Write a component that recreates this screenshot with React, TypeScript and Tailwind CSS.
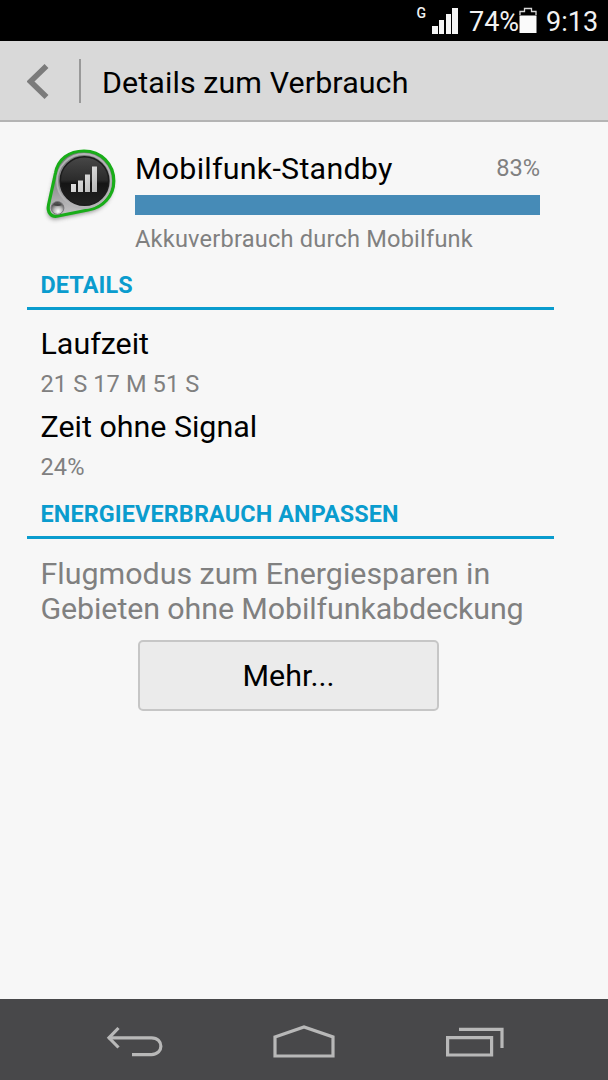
import type { ReactNode } from "react";

function StatusBar() {
  return (
    <div className="flex h-[41px] shrink-0 items-center justify-end bg-black pr-[10px] text-[27px] leading-[40px] text-[#f2f2f2]">
      <span className="mb-[15px] mr-[6px] text-[14px] leading-[14px] font-medium">G</span>
      <svg className="mr-[11px] h-[26px] w-[26px]" viewBox="0 0 26 26" fill="#f5f5f5" shapeRendering="crispEdges">
        <path d="M0 18h6v8H0zM7 12h5v14H7zM14 6h5v20h-5zM20 0h6v26h-6z" />
      </svg>
      <span className="w-[50px] pt-[2px] whitespace-nowrap">74%</span>
      <svg className="mr-[9px] mb-[2px] h-[26px] w-[18px]" viewBox="0 0 18 26">
        <path d="M1 8V4.500H5.500V1.500H12.500V4.500H17V8" fill="none" stroke="#d8d8d8" strokeWidth="1.300" />
        <path d="M0.500 8.500h17V26h-17z" fill="#fafafa" />
      </svg>
      <span className="w-[52px] pt-[2px] whitespace-nowrap">9:13</span>
    </div>
  );
}

function Header() {
  return (
    <header className="flex h-[81px] shrink-0 items-center border-b-2 border-[#b4b4b4] bg-[#d9d9d9]">
      <svg className="ml-[27px] h-[36px] w-[22px]" viewBox="0 0 22 36">
        <path d="M19.500 3 3.500 18.500 19.500 34" fill="none" stroke="#7b7b7b" strokeWidth="5.600" />
      </svg>
      <div className="ml-[30px] h-[44px] w-[2px] bg-[#999999]" />
      <h1 className="ml-[21px] pt-[4px] text-[30.400px] leading-[36px] tracking-[0.1px]">Details zum Verbrauch</h1>
    </header>
  );
}

function StandbyIcon() {
  return (
    <svg className="h-[82px] w-[80px]" viewBox="40 144 80 82">
      <defs>
        <linearGradient id="shell" x1="0" y1="0" x2="0" y2="1">
          <stop offset="0" stopColor="#77797a" />
          <stop offset="0.500" stopColor="#8b8b8d" />
          <stop offset="1" stopColor="#c9c8ca" />
        </linearGradient>
        <linearGradient id="dial" x1="0" y1="0" x2="0" y2="1">
          <stop offset="0" stopColor="#484848" />
          <stop offset="0.480" stopColor="#2b2b2b" />
          <stop offset="0.550" stopColor="#151515" />
          <stop offset="1" stopColor="#222222" />
        </linearGradient>
        <linearGradient id="bars" x1="0" y1="0" x2="1" y2="1">
          <stop offset="0" stopColor="#f5f5f5" />
          <stop offset="1" stopColor="#b5b5b5" />
        </linearGradient>
        <radialGradient id="knob" cx="0.550" cy="0.750" r="0.700">
          <stop offset="0" stopColor="#ffffff" />
          <stop offset="0.450" stopColor="#bbbbbb" />
          <stop offset="1" stopColor="#444444" />
        </radialGradient>
        <filter id="shade" x="-20%" y="-20%" width="140%" height="140%">
          <feGaussianBlur stdDeviation="2" />
        </filter>
      </defs>
      <path d="M55 175C58 160 69 152 84 152C101 152 114 165 114 180C114 196 103 208 88 210L59 216C51 218 47 212 49 205Z" fill="#555555" opacity="0.600" filter="url(#shade)" transform="translate(-1 3)" />
      <path d="M55.500 173C58 159 69 151 84 151C101 151 113.800 164 113.800 181C113.800 196 103 207.500 88 210L58 216C51 217.500 47 212 48.500 205Z" fill="url(#shell)" stroke="#19ad19" strokeWidth="3.200" />
      <circle cx="84" cy="181" r="27" fill="none" stroke="#b4b4b6" strokeWidth="1.800" />
      <circle cx="84.500" cy="181" r="24.300" fill="url(#dial)" stroke="#1c1c1c" strokeWidth="1.500" />
      <circle cx="57.500" cy="208" r="6.400" fill="url(#knob)" stroke="#77777a" strokeWidth="1" />
      <path d="M53 205Q57 201.500 62 205Q58 207 53 205Z" fill="#444444" />
      <path d="M71 184h5v8h-5zM78 180.500h5V192h-5zM85 174.500h5V192h-5zM92 166.500h5V192h-5z" fill="url(#bars)" />
    </svg>
  );
}

function Section({ title, children }: { title: string; children: ReactNode }) {
  return (
    <section className="ml-[27px] w-[527px]">
      <h2 className="h-[39px] border-b-[3px] border-[#0a9cce] pl-[13.500px] text-[23.400px] leading-[28px] font-bold tracking-[0.12px] whitespace-nowrap text-[#0a9cce]">
        {title}
      </h2>
      <div className="pl-[13.500px]">{children}</div>
    </section>
  );
}

function Detail({ label, value }: { label: string; value: string }) {
  return (
    <div className="h-[83px]">
      <div className="text-[30.400px] leading-[36px]">{label}</div>
      <div className="mt-[8px] text-[23.600px] leading-[28px] tracking-[0.1px] text-[#808080]">{value}</div>
    </div>
  );
}

function NavBar() {
  return (
    <nav className="flex h-[81px] shrink-0 items-center bg-[#48484a] pt-[4px]">
      <svg className="ml-[106px] h-[32px] w-[58px]" viewBox="106 1026 58 32" fill="none" stroke="#b8b8b8" strokeWidth="3.200">
        <path d="M108.500 1037.800H151.500C164 1037.800 164 1054.600 151.500 1054.600H132" />
        <path d="M118.500 1028 109 1037.800 118.500 1047.500" />
      </svg>
      <svg className="ml-[109px] h-[34px] w-[62px]" viewBox="273 1024 62 34" fill="none" stroke="#b8b8b8" strokeWidth="3.200">
        <path d="M275 1036 304 1026 333 1036V1055H275Z" />
      </svg>
      <svg className="ml-[110px] h-[32px] w-[60px]" viewBox="445 1026 60 32" fill="none" stroke="#b8b8b8" strokeWidth="3.200">
        <path d="M447.600 1037.600H491.600V1055H447.600ZM459 1029.300H502V1048" />
      </svg>
    </nav>
  );
}

export default function App() {
  return (
    <div className="flex h-[1080px] w-[608px] flex-col overflow-hidden bg-[#f7f7f7] font-['Roboto',sans-serif] text-black">
      <StatusBar />
      <Header />
      <main className="flex flex-1 flex-col">
        <div className="flex h-[149px] shrink-0 pl-[40px]">
          <div className="mt-[22px] w-[95px]">
            <StandbyIcon />
          </div>
          <div className="w-[405px] pt-[29px]">
            <div className="flex h-[36px] justify-between">
              <span className="text-[30.400px] leading-[36px] tracking-[0.25px]">Mobilfunk-Standby</span>
              <span className="text-[23.600px] leading-[34px] text-[#808080]">83%</span>
            </div>
            <div className="mt-[8px] h-[20px] bg-[#468bb7]" />
            <div className="mt-[10px] text-[23.600px] leading-[28px] tracking-[0.2px] text-[#808080]">Akkuverbrauch durch Mobilfunk</div>
          </div>
        </div>
        <Section title="DETAILS">
          <div className="h-[190px] pt-[16px]">
            <Detail label="Laufzeit" value="21 S 17 M 51 S" />
            <Detail label="Zeit ohne Signal" value="24%" />
          </div>
        </Section>
        <Section title="ENERGIEVERBRAUCH ANPASSEN">
          <p className="pt-[17px] text-[30.400px] leading-[35px] whitespace-nowrap text-[#808080]">
            Flugmodus zum Energiesparen in
            <br />
            <span className="tracking-[-0.1px]">Gebieten ohne Mobilfunkabdeckung</span>
          </p>
        </Section>
        <button className="mt-[14px] ml-[138px] h-[71px] w-[301px] rounded-[5px] border-2 border-[#c6c6c6] bg-[#ebebeb] pt-[1px] text-[30.400px] leading-[36px]">
          Mehr...
        </button>
      </main>
      <NavBar />
    </div>
  );
}
